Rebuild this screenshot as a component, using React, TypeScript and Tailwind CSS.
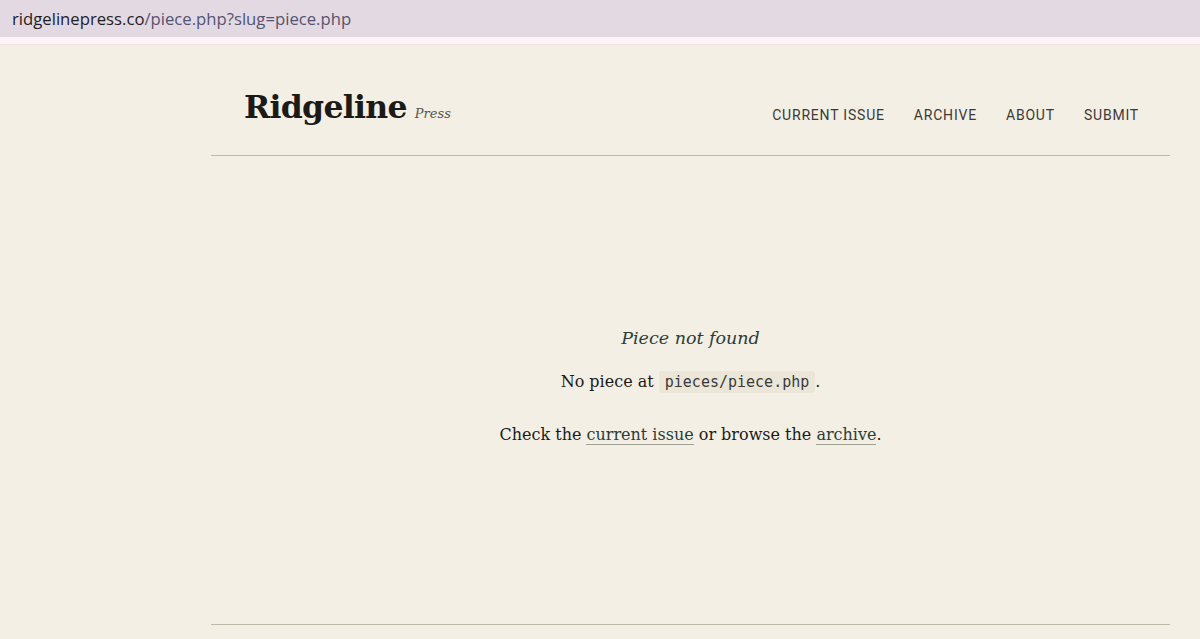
export default function App() {
  const serif = { fontFamily: '"DejaVu Serif", Georgia, serif' };
  return (
    <div className="w-[1200px] h-[639px] overflow-hidden bg-[#f3efe5] flex flex-col">
      <div className="h-[37px] shrink-0 bg-[#e3d9e3] flex items-center pl-[12px] text-[16.7px]" style={{ fontFamily: '"Open Sans", "Noto Sans", sans-serif' }}>
        <span className="text-[#1e1e24]">ridgelinepress.co</span>
        <span className="text-[#545470]">/piece.php?slug=piece.php</span>
      </div>
      <div className="h-[7px] shrink-0 bg-[#fdf4f7]" />
      <div className="h-px shrink-0 bg-[#f1dfe4]" />
      <div className="flex-1 flex flex-col pl-[211px] pr-[30px]">
        <header className="h-[111px] shrink-0 border-b border-[#bfb8a6] flex items-end justify-between pb-[32px] pl-[33px] pr-[31px]">
          <div className="flex items-baseline gap-[8px]">
            <span className="text-[31.5px] font-bold text-[#1c1a16] leading-none tracking-[-0.7px]" style={serif}>Ridgeline</span>
            <span className="text-[13px] italic text-[#5a564c]" style={serif}>Press</span>
          </div>
          <nav className="flex gap-[29px] text-[14px] tracking-[0.8px] text-[#3b3a36] -mb-[3px]" style={{ fontFamily: 'Roboto, "Liberation Sans", sans-serif' }}>
            <span>CURRENT ISSUE</span>
            <span>ARCHIVE</span>
            <span>ABOUT</span>
            <span>SUBMIT</span>
          </nav>
        </header>
        <main className="flex-1 flex flex-col items-center justify-center text-[#1c1a16] text-[16px] pb-[8px]" style={serif}>
          <p className="italic text-[17.5px] text-[#2a3d36]">Piece not found</p>
          <p className="mt-[18px]">
            No piece at{' '}
            <code className="bg-[#ebe6d8] px-[6px] py-[2px] rounded-[3px] text-[15px] text-[#3a3a3a]" style={{ fontFamily: '"DejaVu Sans Mono", monospace' }}>pieces/piece.php</code>.
          </p>
          <p className="mt-[29px]">
            Check the <span className="border-b border-[#9ea394] text-[#2a3d36]">current issue</span> or browse the <span className="border-b border-[#9ea394] text-[#2a3d36]">archive</span>.
          </p>
        </main>
        <div className="h-[15px] shrink-0 border-t border-[#bfb8a6]" />
      </div>
    </div>
  );
}
